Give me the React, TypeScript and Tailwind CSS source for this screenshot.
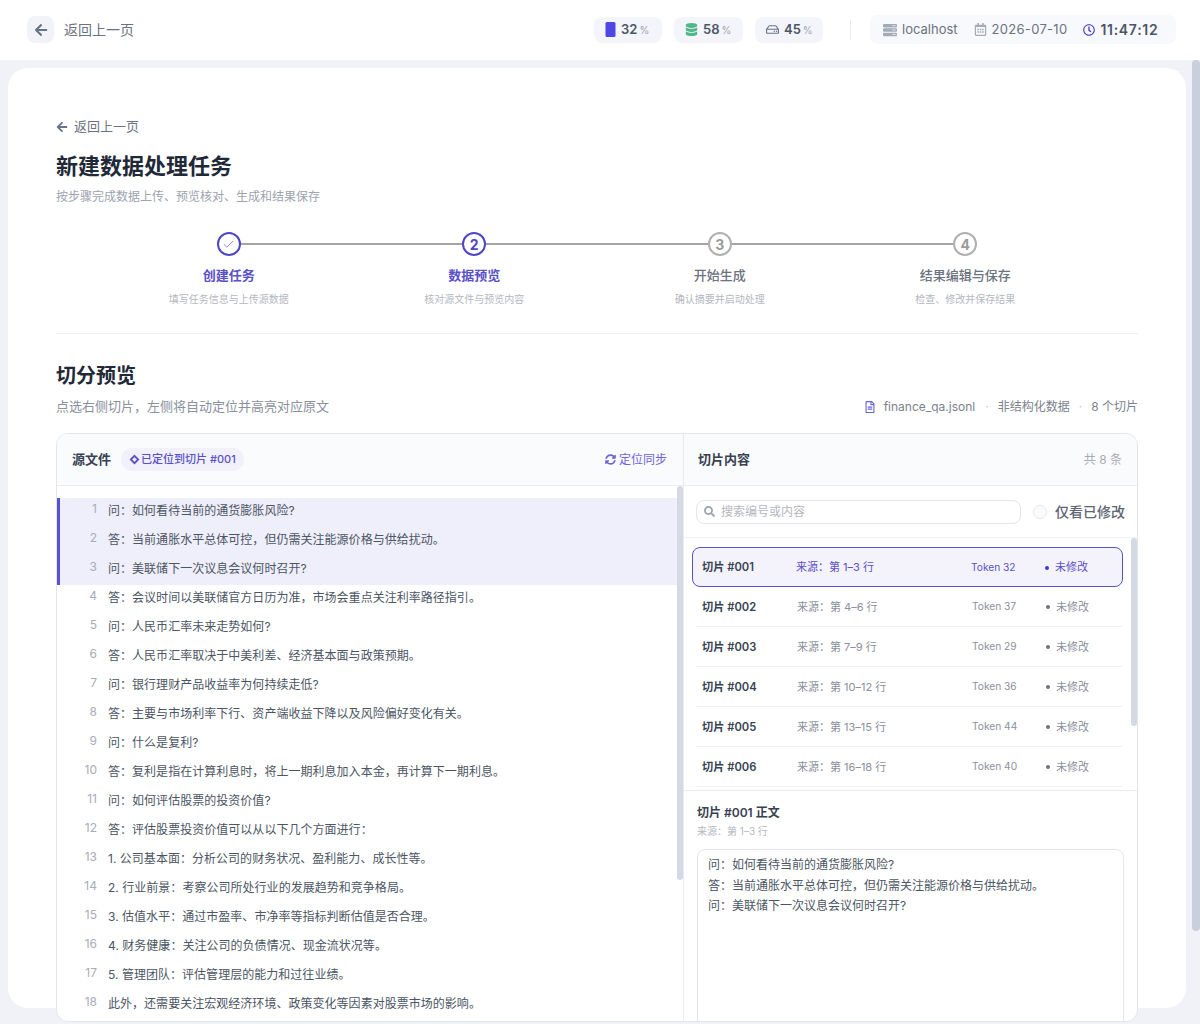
import React from "react";
import { FaArrowLeft, FaDatabase, FaRegHdd, FaServer, FaRegCalendarAlt, FaRegClock, FaRegFileAlt, FaSyncAlt, FaSearch } from "react-icons/fa";
import { Check } from "lucide-react";

const lines = [
  "问：如何看待当前的通货膨胀风险?",
  "答：当前通胀水平总体可控，但仍需关注能源价格与供给扰动。",
  "问：美联储下一次议息会议何时召开?",
  "答：会议时间以美联储官方日历为准，市场会重点关注利率路径指引。",
  "问：人民币汇率未来走势如何?",
  "答：人民币汇率取决于中美利差、经济基本面与政策预期。",
  "问：银行理财产品收益率为何持续走低?",
  "答：主要与市场利率下行、资产端收益下降以及风险偏好变化有关。",
  "问：什么是复利?",
  "答：复利是指在计算利息时，将上一期利息加入本金，再计算下一期利息。",
  "问：如何评估股票的投资价值?",
  "答：评估股票投资价值可以从以下几个方面进行：",
  "1. 公司基本面：分析公司的财务状况、盈利能力、成长性等。",
  "2. 行业前景：考察公司所处行业的发展趋势和竞争格局。",
  "3. 估值水平：通过市盈率、市净率等指标判断估值是否合理。",
  "4. 财务健康：关注公司的负债情况、现金流状况等。",
  "5. 管理团队：评估管理层的能力和过往业绩。",
  "此外，还需要关注宏观经济环境、政策变化等因素对股票市场的影响。",
];

const chunks = [
  ["切片 #001", "来源：第 1–3 行", "Token 32"],
  ["切片 #002", "来源：第 4–6 行", "Token 37"],
  ["切片 #003", "来源：第 7–9 行", "Token 29"],
  ["切片 #004", "来源：第 10–12 行", "Token 36"],
  ["切片 #005", "来源：第 13–15 行", "Token 44"],
  ["切片 #006", "来源：第 16–18 行", "Token 40"],
];

const steps = [
  { n: "", title: "创建任务", desc: "填写任务信息与上传源数据", active: true },
  { n: "2", title: "数据预览", desc: "核对源文件与预览内容", active: true },
  { n: "3", title: "开始生成", desc: "确认摘要并启动处理", active: false },
  { n: "4", title: "结果编辑与保存", desc: "检查、修改并保存结果", active: false },
];

function Stat({ icon, value, wide }: { icon: React.ReactNode; value: string; wide?: boolean }) {
  return (
    <div className={wide ? "flex h-[26px] w-[69px] items-center gap-[5px] rounded-lg bg-[#f3f5fa] pl-[11px]" : "flex h-[26px] w-[68px] items-center gap-[5px] rounded-lg bg-[#f3f5fa] pl-[11px]"}>
      {icon}
      <span className="text-[13px] font-semibold text-[#4b5563]">
        {value}
        <span className="ml-[2px] text-[10px] font-normal text-[#9ca3af]">%</span>
      </span>
    </div>
  );
}

export default function App() {
  return (
    <div className="relative flex h-[1024px] flex-col overflow-hidden bg-[#f0f2f7] font-['Inter','Noto_Sans_CJK_SC',sans-serif]">
      <header className="flex h-[60px] shrink-0 items-center bg-white pb-px pl-[27px] pr-[24px]">
        <div className="flex size-[27px] items-center justify-center rounded-lg bg-[#f1f3f9] text-[#64748b]">
          <FaArrowLeft size={14} />
        </div>
        <span className="mb-px ml-[10px] text-[14px] text-[#6b7280]">返回上一页</span>
        <div className="ml-auto flex items-center gap-3">
          <Stat
            icon={
              <svg width="11" height="15" viewBox="0 0 11 15" className="text-[#4f46e5]">
                <rect x="0.5" y="0" width="10" height="15" rx="1.5" fill="currentColor" />
              </svg>
            }
            value="32"
          />
          <Stat wide icon={<FaDatabase size={13} className="text-[#52b788]" />} value="58" />
          <Stat icon={<FaRegHdd size={13} className="text-[#64748b]" />} value="45" />
          <div className="ml-[15px] mr-[7px] h-[20px] w-px bg-[#e8eaf0]" />
          <div className="flex h-[29px] w-[306px] items-center rounded-lg bg-[#f8f9fc] pl-[13px] text-[13px] text-[#6b7280]">
            <FaServer size={14} className="text-[#a3abb8]" />
            <span className="ml-[5px]">localhost</span>
            <FaRegCalendarAlt size={13} className="ml-[16px] text-[#a3abb8]" />
            <span className="ml-[5px] tracking-[0.3px]">2026-07-10</span>
            <FaRegClock size={12} className="ml-[16px] text-[#4338ca]" />
            <span className="ml-[5px] text-[14px] font-semibold tracking-[0.7px] text-[#4b5563]">11:47:12</span>
          </div>
        </div>
      </header>

      <main className="flex-1 pl-2 pr-[14px] pt-2">
        <div className="h-[940px] rounded-[20px] bg-white px-12 pt-[50px]">
          <div className="flex h-[18px] items-center gap-[6px] text-[13px] text-[#6b7280]">
            <FaArrowLeft size={12} className="text-[#64748b]" />
            返回上一页
          </div>
          <h1 className="mt-[14px] text-[22px] font-bold leading-[32px] text-[#1f2937]">新建数据处理任务</h1>
          <p className="mt-[6px] text-[12px] leading-[18px] text-[#9ca3af]">按步骤完成数据上传、预览核对、生成和结果保存</p>

          <div className="mt-[26px] flex px-[50px]">
            {steps.map((s, i) => (
              <div key={s.title} className="relative flex flex-1 flex-col items-center">
                {i < 3 && <div className="absolute left-[calc(50%+12px)] top-[11px] h-[2px] w-[calc(100%-24px)] bg-[#a3a3a3]" />}
                <div
                  className={
                    s.active
                      ? "flex size-6 items-center justify-center rounded-full border-2 border-[#4f46c5] text-[14px] font-bold text-[#4f46c5]"
                      : "flex size-6 items-center justify-center rounded-full border-2 border-[#b0b0b0] text-[14px] font-bold text-[#9a9a9a]"
                  }
                >
                  {s.n || <Check size={13} strokeWidth={1.2} className="text-[#4f46c5]" />}
                </div>
                <div className={s.active ? "mt-[12px] text-[13px] font-semibold leading-[14px] text-[#5a50c8]" : "mt-[12px] text-[13px] font-medium leading-[14px] text-[#6b7280]"}>
                  {s.title}
                </div>
                <div className="mt-[10px] text-[10px] leading-[14px] text-[#b4b8c0]">{s.desc}</div>
              </div>
            ))}
          </div>

          <div className="mt-[27px] h-px bg-[#eceef2]" />

          <h2 className="mt-[28px] text-[20px] font-bold leading-[28px] text-[#1f2937]">切分预览</h2>
          <div className="mt-[7px] flex h-[20px] items-center justify-between">
            <p className="text-[13px] text-[#8a909c]">点选右侧切片，左侧将自动定位并高亮对应原文</p>
            <div className="flex items-center text-[12px] text-[#7b828e]">
              <FaRegFileAlt size={12} className="text-[#6d64d8]" />
              <span className="ml-[8px]">finance_qa.jsonl</span>
              <span className="ml-[10px] mr-[9px] text-[#c4c8d0]">·</span>
              <span>非结构化数据</span>
              <span className="mx-[9px] text-[#c4c8d0]">·</span>
              <span>8 个切片</span>
            </div>
          </div>

          <div className="relative z-10 mt-[16px] flex h-[589px] overflow-hidden rounded-xl border border-[#e3e6ec] bg-white">
            <section className="relative flex w-[627px] shrink-0 flex-col border-r border-[#e9ebf0]">
              <div className="flex h-[52px] shrink-0 items-center border-b border-[#eceef2] bg-[#fafbfd] pl-[15px] pr-[16px]">
                <span className="text-[13px] font-semibold text-[#374151]">源文件</span>
                <span className="ml-[10px] flex h-[23px] items-center gap-px rounded-full bg-[#f1f0fb] px-[8px] text-[11px] font-medium text-[#5a50c8]">
                  <svg width="11" height="11" viewBox="0 0 12 12" fill="none" stroke="currentColor" strokeWidth="2">
                    <path d="M6 2 10 6 6 10 2 6Z" />
                  </svg>
                  已定位到切片 #001
                </span>
                <span className="ml-auto flex items-center gap-[3px] text-[12px] text-[#6d64d8]">
                  <FaSyncAlt size={11} />
                  定位同步
                </span>
              </div>
              <div className="pt-[12px]">
                {lines.map((t, i) => (
                  <div
                    key={i}
                    className={
                      i < 3
                        ? "flex h-[29px] border-l-[3px] border-[#5a50d6] bg-[#efeefb] pr-[6px]"
                        : "flex h-[29px] border-l-[3px] border-transparent pr-[6px]"
                    }
                  >
                    <span className="w-[37px] pt-[2px] text-right text-[12px] leading-[18px] text-[#a7acb6]">{i + 1}</span>
                    <span className="ml-[11px] pt-[4px] text-[12px] leading-[18px] tracking-[0.03px] text-[#4b5563]">{t}</span>
                  </div>
                ))}
              </div>
              <div className="absolute right-0 top-[52px] h-[394px] w-[6px] rounded-full bg-[#d5d9e4]" />
            </section>

            <section className="flex min-w-0 flex-1 flex-col">
              <div className="flex h-[52px] shrink-0 items-center justify-between border-b border-[#eceef2] bg-[#fafbfd] pl-[14px] pr-[15px]">
                <span className="text-[13px] font-semibold text-[#374151]">切片内容</span>
                <span className="text-[12px] text-[#a7acb6]">共 8 条</span>
              </div>
              <div className="flex h-[52px] shrink-0 items-center border-b border-[#f1f2f5] pl-[12px] pr-[12px]">
                <div className="flex h-[24px] w-[325px] items-center gap-[6px] rounded-lg border border-[#e3e6ec] pl-[7px] text-[12px] text-[#b4b8c0]">
                  <FaSearch size={11} className="text-[#9ca3af]" />
                  搜索编号或内容
                </div>
                <span className="ml-[12px] size-[14px] rounded-full border border-[#e3e6ec] bg-[#fafbfc]" />
                <span className="ml-[8px] text-[14px] font-medium text-[#606672]">仅看已修改</span>
              </div>
              <div className="relative h-[253px] shrink-0 overflow-hidden border-b border-[#e9ebf0] pl-[8px] pr-[14px] pt-[9px]">
                {chunks.map((c, i) => (
                  <div
                    key={c[0]}
                    className={
                      i === 0
                        ? "flex h-[40px] items-center rounded-lg border border-[#5a50c8] bg-[#f4f3fc] pl-[9px] pt-px text-[11px] text-[#5a50c8]"
                        : "ml-[4px] mr-px flex h-[40px] items-center border-b border-[#f0f1f4] pl-[6px] pt-px text-[11px] text-[#8a909c]"
                    }
                  >
                    <span className={i === 0 ? "w-[94px] text-[11.2px] font-semibold text-[#374151]" : "w-[95px] text-[11.2px] font-semibold text-[#374151]"}>{c[0]}</span>
                    <span className="w-[175px] shrink-0">{c[1]}</span>
                    <span className="w-[74px] shrink-0 text-[10.2px]">{c[2]}</span>
                    <span className={i === 0 ? "size-[4px] rounded-full bg-[#4338ca]" : "size-[4px] rounded-full bg-[#6b7280]"} />
                    <span className="ml-[6px]">未修改</span>
                  </div>
                ))}
                <div className="absolute right-0 top-0 h-[188px] w-[6px] rounded-full bg-[#d5d9e4]" />
              </div>
              <div className="flex-1 px-[13px] pt-[14px]">
                <div className="text-[12px] font-semibold leading-[16px] text-[#374151]">切片 #001 正文</div>
                <div className="mt-[3px] text-[10px] leading-[14px] text-[#b4b8c0]">来源：第 1–3 行</div>
                <div className="mt-[11px] h-[300px] rounded-lg border border-[#e3e6ec] px-[10px] pt-[5px] text-[12px] leading-[20.6px] text-[#4b5563]">
                  <div>问：如何看待当前的通货膨胀风险?</div>
                  <div>答：当前通胀水平总体可控，但仍需关注能源价格与供给扰动。</div>
                  <div>问：美联储下一次议息会议何时召开?</div>
                </div>
              </div>
            </section>
          </div>
        </div>
      </main>

      <div className="absolute right-0 top-[60px] h-[871px] w-[8px] rounded-full bg-[#c9cfdd]" />
    </div>
  );
}
